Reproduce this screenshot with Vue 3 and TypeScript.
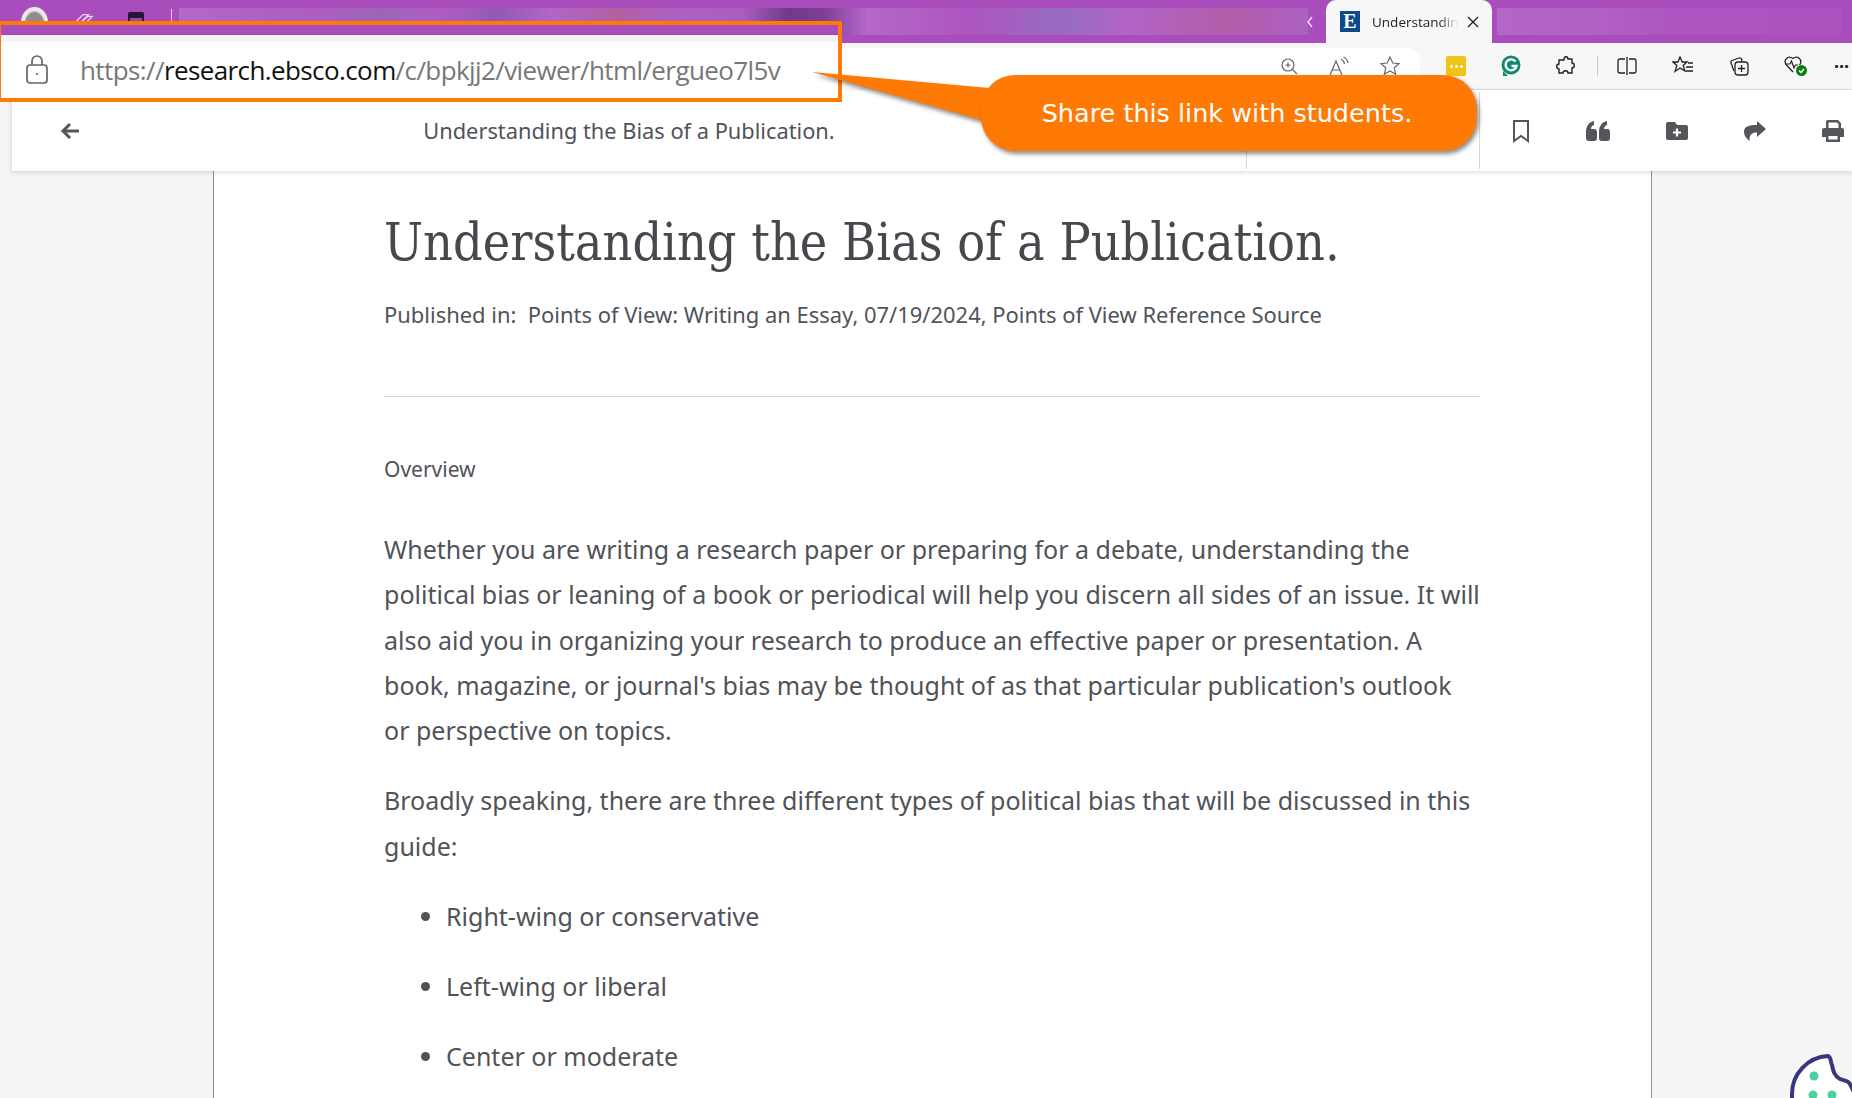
<template>
  <div class="page">
    <div class="tabstrip">
      <div class="profile">
        <span class="avatar"></span>
        <svg class="strip-icon one" width="20" height="18" viewBox="0 0 22 18" fill="none" stroke="#e9d5ee" stroke-width="1.4">
          <path d="M3 9 10 2h6l-8 8v6H4z" />
          <path d="M8 10l7-6h5l-8 8v4H8z" />
        </svg>
        <svg class="strip-icon two" width="18" height="18" viewBox="0 0 18 18">
          <rect x="1" y="0" width="16" height="15" rx="2" fill="#27143a" />
          <rect x="3" y="6" width="12" height="9" fill="#9a4bb0" />
        </svg>
        <span class="strip-divider"></span>
      </div>
      <div class="blur-tabs first"></div>
      <svg class="chev" width="8" height="12" viewBox="0 0 8 12" fill="none" stroke="#f1e2f5" stroke-width="1.4"><path d="M6 1 2 6l4 5" /></svg>
      <div class="tab">
        <span class="favicon">E</span>
        <span class="tab-title">Understandin</span>
        <svg class="tab-close" width="12" height="12" viewBox="0 0 12 12" stroke="#222" stroke-width="1.4"><path d="M1 1l10 10M11 1 1 11" /></svg>
      </div>
      <div class="blur-tabs second"></div>
    </div>

    <div class="addressrow">
      <div class="field">
        <svg width="20" height="20" viewBox="0 0 20 20" fill="none" stroke="#666" stroke-width="1.2">
          <circle cx="9" cy="9" r="6" />
          <path d="M9 6.5v5M6.5 9h5M13.5 13.5 18 18" />
        </svg>
        <svg width="22" height="20" viewBox="0 0 22 20" fill="none" stroke="#666" stroke-width="1.2">
          <path d="M2 19 8 5l6 14M4.5 14h7" />
          <path d="M13 3c2 1 3 2.500 3.500 5M15.500 1c2.500 1 4 3 4.500 6" />
        </svg>
        <svg width="22" height="22" viewBox="0 0 22 22" fill="none" stroke="#666" stroke-width="1.2">
          <path d="m11 2 2.700 6 6.300.6-4.800 4.200 1.500 6.400L11 16l-5.700 3.200 1.500-6.400L2 8.600 8.300 8z" />
        </svg>
      </div>
      <div class="browser-tools">
        <span class="pw"><i></i><i></i><i></i></span>
        <svg width="20" height="22" viewBox="0 0 20 22">
          <circle cx="10" cy="10" r="9.500" fill="#0f8a6d" />
          <path d="M2 16v5h5z" fill="#0f8a6d" />
          <path d="M14.500 6.500A5.500 5.500 0 1 0 15.500 11H10.500" fill="none" stroke="#fff" stroke-width="2.400" />
        </svg>
        <svg width="20" height="20" viewBox="0 0 20 20" fill="none" stroke="#222" stroke-width="1.400">
          <path d="M8 3c0-3 4-3 4 0h4v4c3 0 3 5 0 5v5h-4c0-3-5-3-5 0H3v-4c-3 0-3-5 0-5V4h5z" />
        </svg>
        <span class="tool-divider"></span>
        <svg width="20" height="20" viewBox="0 0 20 20" fill="none" stroke="#222" stroke-width="1.300">
          <path d="M10 1v18M8 3H3a2 2 0 0 0-2 2v10a2 2 0 0 0 2 2h5M12 3h5a2 2 0 0 1 2 2v10a2 2 0 0 1-2 2h-5" />
        </svg>
        <svg width="22" height="20" viewBox="0 0 22 20" fill="none" stroke="#222" stroke-width="1.300">
          <path d="m8 1 2.200 5H15l-3.800 3.400L13 15l-5-3-5 3.500 1.800-6.100L1 6h5z" />
          <path d="M16 7h5M14 11h7M14 15h7" />
        </svg>
        <svg width="20" height="20" viewBox="0 0 20 20" fill="none" stroke="#222" stroke-width="1.300">
          <rect x="6" y="6" width="13" height="13" rx="3" />
          <path d="M12.500 9v7M9 12.500h7M5 15 2 7a2 2 0 0 1 1-2.500L10 2a2 2 0 0 1 2.500 1l.7 3" />
        </svg>
        <svg width="24" height="22" viewBox="0 0 24 22">
          <path d="M9 17 2.500 10C-1 6 3.500-.5 9 3.500 14.500-.5 19 6 15.500 10" fill="none" stroke="#222" stroke-width="1.300" />
          <path d="M1 9h5l1.500-3 2.500 7 1.500-3H14" fill="none" stroke="#222" stroke-width="1.200" />
          <circle cx="17.500" cy="15.500" r="5.500" fill="#107c10" />
          <path d="m15 15.500 2 2 3-3.500" fill="none" stroke="#fff" stroke-width="1.300" />
        </svg>
        <span class="more">···</span>
      </div>
    </div>

    <div class="viewer-bar">
      <div class="viewer-title">
        <svg class="back" width="20" height="18" viewBox="0 0 20 18" fill="none" stroke="#53565a" stroke-width="3">
          <path d="M10 2 3 9l7 7M3 9h16" />
        </svg>
        <span class="doc-title">Understanding the Bias of a Publication.</span>
      </div>
      <div class="viewer-gap"></div>
      <div class="viewer-actions">
        <svg width="18" height="24" viewBox="0 0 18 24" fill="none" stroke="#53565a" stroke-width="2"><path d="M2 2h14v20l-7-5-7 5z" /></svg>
        <svg width="24" height="20" viewBox="0 0 24 20" fill="#53565a">
          <path d="M0 11C0 5 3 1 8 0v4c-2 .5-3 2-3 4h3a3 3 0 0 1 3 3v6a3 3 0 0 1-3 3H3a3 3 0 0 1-3-3z" />
          <path d="M13 11c0-6 3-10 8-11v4c-2 .5-3 2-3 4h3a3 3 0 0 1 3 3v6a3 3 0 0 1-3 3h-5a3 3 0 0 1-3-3z" />
        </svg>
        <svg width="22" height="18" viewBox="0 0 22 18">
          <path d="M2 0h7l2 3h9a2 2 0 0 1 2 2v11a2 2 0 0 1-2 2H2a2 2 0 0 1-2-2V2a2 2 0 0 1 2-2z" fill="#53565a" />
          <path d="M11 6.500v8M7 10.500h8" stroke="#fff" stroke-width="2.200" />
        </svg>
        <svg width="22" height="20" viewBox="0 0 22 20" fill="#53565a">
          <path d="M13 0l9 8-9 8v-4.500C7.500 11.500 5 14 5.500 20 1.500 17 0 14 0 11c0-5.500 5-7 13-7z" />
        </svg>
        <svg width="22" height="22" viewBox="0 0 22 22" fill="#53565a">
          <path d="M4 9V2a2 2 0 0 1 2-2h10l3 3v6h-2.500V4L15 2.500H6.500V9z" />
          <path d="M2 8h18a2 2 0 0 1 2 2v7h-4v5H4v-5H0v-7a2 2 0 0 1 2-2zm4.500 8v3.500h9V16z" />
        </svg>
      </div>
    </div>

    <main class="article-wrap">
      <article class="article">
        <h1>Understanding the Bias of a Publication.</h1>
        <p class="published">Published in:&nbsp; Points of View: Writing an Essay, 07/19/2024, Points of View Reference Source</p>
        <hr />
        <p class="overview">Overview</p>
        <p class="body">
          Whether you are writing a research paper or preparing for a debate, understanding the political bias or leaning of a book or periodical will help you discern all sides of an issue. It will also aid you in organizing your research to produce an effective paper or presentation. A book, magazine, or journal's bias may be thought of as that particular publication's outlook or perspective on topics.
        </p>
        <p class="body">Broadly speaking, there are three different types of political bias that will be discussed in this guide:</p>
        <ul>
          <li v-for="item in biasTypes" :key="item">{{ item }}</li>
        </ul>
      </article>
    </main>

    <!-- pasted crop of the address bar, sits over the browser chrome -->
    <div class="url-box">
      <div class="url-band"></div>
      <div class="url-gray"></div>
      <div class="url-field">
        <svg width="24" height="30" viewBox="0 0 24 30" fill="none" stroke="#666" stroke-width="1.700">
          <rect x="2" y="10" width="20" height="18" rx="3" />
          <path d="M7 10V6a5 5 0 0 1 10 0v4" />
          <circle cx="12" cy="19" r="1" fill="#555" stroke="none" />
        </svg>
        <span class="url"><span class="muted">https://</span>research.ebsco.com<span class="muted">/c/bpkjj2/viewer/html/ergueo7l5v</span></span>
      </div>
    </div>

    <svg class="pointer" width="190" height="70" viewBox="0 0 190 70">
      <path d="M0 0 188 17V50H176z" fill="#ff7a05" />
    </svg>
    <div class="callout">Share this link with students.</div>

    <svg class="cookie" width="64" height="50" viewBox="0 0 64 50">
      <path d="M40 8C44 10 42 14 44 17C45 22 46 28 52 31C56 33 60 32 62 36L66 44V80H4V46A38 38 0 0 1 40 8z" fill="#fff" stroke="#39377c" stroke-width="4" />
      <circle cx="26" cy="28" r="4.500" fill="#49d29c" />
      <circle cx="25" cy="47" r="4.500" fill="#49d29c" />
      <circle cx="44" cy="47" r="4.500" fill="#49d29c" />
    </svg>
  </div>
</template>

<script setup lang="ts">
const biasTypes: string[] = ['Right-wing or conservative', 'Left-wing or liberal', 'Center or moderate']
</script>

<style>
html,
body {
  margin: 0;
  background: #f5f5f5;
  overflow: hidden;
}
</style>

<style scoped>
.page {
  position: relative;
  width: 1852px;
  height: 1098px;
  overflow: hidden;
  background: #f5f5f5;
  font-family: "Noto Sans", sans-serif;
  color: #505358;
}

.tabstrip {
  display: flex;
  align-items: flex-start;
  height: 43px;
  background: #a94dbd;
}
.profile {
  display: flex;
  align-items: flex-start;
  width: 179px;
  flex: none;
}
.avatar {
  width: 27px;
  height: 30px;
  margin: 7px 0 0 21px;
  border-radius: 50%;
  background: radial-gradient(ellipse at 50% 60%, #8d8d8d 0 9px, #efe6ea 11px);
}
.strip-icon {
  margin-top: 12px;
}
.strip-icon.one {
  margin-left: 26px;
}
.strip-icon.two {
  margin-left: 33px;
}
.strip-divider {
  width: 1px;
  height: 13px;
  margin: 9px 0 0 26px;
  background: #e3c5ea;
}
.blur-tabs {
  height: 27px;
  margin-top: 8px;
}
.blur-tabs.first {
  width: 1129px;
  flex: none;
  background: linear-gradient(90deg, #b468c8 0, #ae5cc2 12%, #9a67b4 18%, #b05cc4 22%, #a85ac0 25%, #8f5bb0 28%, #b365c8 33%, #b1609f 39%, #b060c5 44%, #a95dbf 50%, #6f3a88 54%, #7d3f95 57%, #b567ca 61%, #ad55c0 70%, #966cc2 78%, #b264c8 84%, #b15ea8 93%, #ad60c3 100%);
}
.blur-tabs.second {
  width: 345px;
  margin-left: 5px;
  flex: none;
  background: linear-gradient(90deg, #b465c8 0, #b160c6 30%, #ad56c1 50%, #ab52bf 100%);
}
.chev {
  margin: 16px 0 0 -2px;
  flex: none;
}
.tab {
  display: flex;
  align-items: center;
  flex: none;
  width: 166px;
  height: 43px;
  margin-left: 12px;
  padding: 0 13px 0 14px;
  box-sizing: border-box;
  background: #f7f7f7;
  border-radius: 10px 10px 0 0;
  font-family: "Open Sans", sans-serif;
  font-size: 13.500px;
  color: #222;
}
.favicon {
  flex: none;
  width: 20px;
  height: 21px;
  margin-right: 12px;
  background: #0c4a8a;
  color: #fff;
  font-family: "Liberation Serif", serif;
  font-size: 20px;
  font-weight: 700;
  line-height: 21px;
  text-align: center;
}
.tab-title {
  white-space: nowrap;
  -webkit-mask-image: linear-gradient(90deg, #000 78%, transparent 100%);
  mask-image: linear-gradient(90deg, #000 78%, transparent 100%);
}
.tab-close {
  flex: none;
  margin-left: auto;
}

.addressrow {
  display: flex;
  height: 47px;
  background: #f7f7f7;
  box-sizing: border-box;
  border-bottom: 1px solid #e4e4e4;
}
.field {
  display: flex;
  flex: none;
  align-items: center;
  justify-content: flex-end;
  gap: 29px;
  width: 1420px;
  height: 42px;
  margin-top: 5px;
  padding: 0 19px 6px 0;
  box-sizing: border-box;
  background: #fff;
  border-radius: 0 14px 0 0;
}
.browser-tools {
  flex: 1;
  display: flex;
  align-items: center;
  height: 48px;
  margin-top: -1px;
  padding-left: 26px;
  gap: 35px;
}
.pw {
  display: flex;
  align-items: center;
  justify-content: center;
  gap: 2px;
  width: 20px;
  height: 20px;
  border-radius: 2px;
  background: #efc414;
}
.pw i {
  width: 3px;
  height: 3px;
  border-radius: 50%;
  background: #fff;
}
.tool-divider {
  width: 1px;
  height: 20px;
  margin: 0 -16px 0 -14px;
  background: #ccc;
}
.more {
  color: #222;
  font-size: 18px;
  font-weight: 700;
  margin-left: -9px;
}

.viewer-bar {
  position: relative;
  display: flex;
  height: 81px;
  margin-left: 12px;
  background: #fff;
  box-shadow: 0 1px 5px rgba(0, 0, 0, 0.16);
  z-index: 1;
}
.viewer-title {
  display: grid;
  grid-template-columns: 1fr auto 1fr;
  align-items: center;
  width: 1234px;
  flex: none;
}
.back {
  margin-left: 48px;
}
.doc-title {
  font-size: 21.800px;
}
.viewer-gap {
  flex: none;
  box-sizing: border-box;
  width: 234px;
  margin: 2px 0;
  border-left: 1px solid #d8d8d8;
  border-right: 1px solid #d8d8d8;
}
.viewer-actions {
  flex: 1;
  display: flex;
  align-items: center;
  gap: 56px;
  padding-left: 32px;
}

.article-wrap {
  padding-left: 213px;
}
.article {
  width: 1096px;
  height: 893px;
  padding: 34px 171px 0 170px;
  background: #fff;
  border-left: 1px solid #8f8f8f;
  border-right: 1px solid #8f8f8f;
}
h1 {
  margin: 0;
  font-family: "DejaVu Serif Condensed", "DejaVu Serif", serif;
  font-size: 51.600px;
  font-weight: 400;
  line-height: 74px;
  white-space: nowrap;
  color: #45484d;
}
.published {
  margin: 20px 0 0;
  font-size: 21.950px;
  line-height: 32px;
  white-space: nowrap;
}
hr {
  height: 1px;
  margin: 65px 0 0;
  border: 0;
  background: #d4d4d6;
}
.overview {
  margin: 57px 0 0;
  font-size: 21px;
  line-height: 30px;
}
.body {
  margin: 43px 0 0;
  font-size: 25px;
  line-height: 45.300px;
}
.body + .body {
  margin-top: 25px;
}
ul {
  margin: 25px 0 0;
  padding: 0 0 0 62px;
  font-size: 25px;
  line-height: 45.300px;
}
li {
  margin-bottom: 24.700px;
}

.url-box {
  position: absolute;
  left: -3px;
  top: 21px;
  width: 837px;
  height: 73px;
  border: 4px solid #ff7a05;
  display: flex;
  flex-direction: column;
  z-index: 3;
}
.url-band {
  height: 9px;
  background: #a94dbd;
  border-bottom: 1px solid #9a45ad;
}
.url-gray {
  height: 7px;
  background: #f3f3f3;
}
.url-field {
  flex: 1;
  display: flex;
  align-items: center;
  padding-left: 24px;
  background: #fff;
}
.url {
  margin-left: 31px;
  font-family: "Open Sans", sans-serif;
  font-size: 26px;
  letter-spacing: -0.6px;
  white-space: nowrap;
  color: #111;
}
.muted {
  color: #777;
}
.pointer {
  position: absolute;
  left: 812px;
  top: 72px;
  z-index: 3;
  filter: drop-shadow(2px 3px 2px rgba(0, 0, 0, 0.45));
}
.callout {
  position: absolute;
  left: 981px;
  top: 75px;
  width: 492px;
  height: 76px;
  padding-right: 4px;
  border-radius: 34px;
  background: #ff7a05;
  box-shadow: 2px 3px 4px rgba(0, 0, 0, 0.45);
  color: #fff;
  font-family: "DejaVu Sans", sans-serif;
  font-size: 25.500px;
  line-height: 76px;
  text-align: center;
  z-index: 4;
}
.cookie {
  position: absolute;
  right: 0;
  bottom: 0;
  z-index: 5;
}
</style>
